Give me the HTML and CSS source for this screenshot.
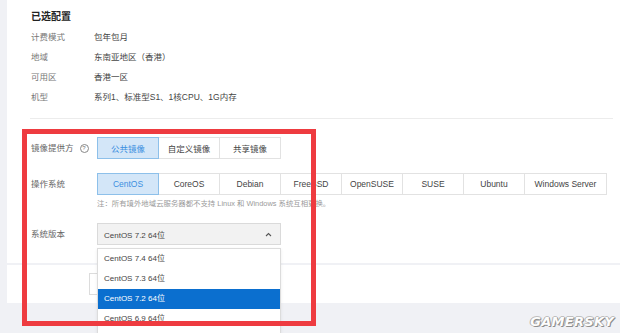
FILE: index.html
```html
<!DOCTYPE html>
<html lang="zh">
<head>
<meta charset="utf-8">
<link rel="stylesheet" href="styles.css">
</head>
<body>
<div class="page">
  <div class="card card-main">
    <h3 class="title">已选配置</h3>
    <div class="info">
      <span class="lbl">计费模式</span><span class="val">包年包月</span>
      <span class="lbl">地域</span><span class="val">东南亚地区（香港）</span>
      <span class="lbl">可用区</span><span class="val">香港一区</span>
      <span class="lbl">机型</span><span class="val">系列1、标准型S1、1核CPU、1G内存</span>
    </div>
    <div class="divider"></div>
    <div class="form">
      <div class="row">
        <div class="flabel">镜像提供方 <span class="help">?</span></div>
        <div class="btns">
          <span class="btn on">公共镜像</span><span class="btn">自定义镜像</span><span class="btn">共享镜像</span>
        </div>
      </div>
      <div class="row row-os">
        <div class="flabel">操作系统</div>
        <div class="col">
          <div class="btns">
            <span class="btn on">CentOS</span><span class="btn">CoreOS</span><span class="btn">Debian</span><span class="btn">FreeBSD</span><span class="btn">OpenSUSE</span><span class="btn">SUSE</span><span class="btn">Ubuntu</span><span class="btn wide">Windows Server</span>
          </div>
          <div class="note">注：所有境外地域云服务器都不支持 Linux 和 Windows 系统互相更换。</div>
        </div>
      </div>
      <div class="row row-ver">
        <div class="flabel">系统版本</div>
        <div class="select-wrap">
          <div class="select">
            <span>CentOS 7.2 64位</span>
            <svg class="caret" width="7" height="5" viewBox="0 0 7 5"><path d="M1 4 L3.5 1.5 L6 4" fill="none" stroke="#555" stroke-width="1.1"/></svg>
          </div>
          <ul class="menu">
            <li>CentOS 7.4 64位</li>
            <li>CentOS 7.3 64位</li>
            <li class="sel">CentOS 7.2 64位</li>
            <li>CentOS 6.9 64位</li>
          </ul>
        </div>
      </div>
    </div>
  </div>
  <div class="card card-foot">
    <span class="fbtn"></span>
  </div>
</div>
<div class="redbox"></div>
<div class="wm">GAMERSKY</div>
</body>
</html>
```
FILE: styles.css
```css
html, body {
  margin: 0;
  padding: 0;
}
body {
  width: 620px;
  height: 333px;
  overflow: hidden;
  background: #f0f1f5;
  font-family: "Liberation Sans", "Noto Sans CJK SC", sans-serif;
  font-size: 8.5px;
  color: #444;
  position: relative;
}
.page {
  padding-left: 7px;
}
.card {
  background: #fff;
}
.card-main {
  height: 263px;
  padding: 8px 7px 0 24px;
  box-sizing: border-box;
}
.title {
  margin: 0;
  font-size: 10px;
  line-height: 18px;
  font-weight: bold;
  color: #222;
}
.info {
  display: grid;
  grid-template-columns: 63px auto;
  line-height: 20px;
  margin-top: 1px;
}
.lbl {
  color: #777;
}
.val {
  color: #444;
}
.divider {
  margin-top: 11px;
  border-top: 1px solid #ececec;
  margin-left: -1px;
}
.form {
  padding-top: 18px;
}
.row {
  display: flex;
  align-items: flex-start;
}
.flabel {
  width: 66px;
  flex: none;
  line-height: 22px;
  color: #666;
  display: flex;
  align-items: center;
}
.help {
  display: inline-flex;
  width: 7px;
  height: 7px;
  border: 1px solid #888;
  border-radius: 50%;
  font-size: 6px;
  line-height: 7px;
  justify-content: center;
  color: #777;
  margin-left: 6px;
}
.btns {
  display: flex;
}
.btn {
  width: 62px;
  height: 22px;
  box-sizing: border-box;
  border: 1px solid #e2e2e2;
  margin-left: -1px;
  display: flex;
  align-items: center;
  justify-content: center;
  color: #444;
  background: #fff;
}
.btn:first-child {
  margin-left: 0;
}
.btn.wide {
  width: 83px;
}
.btn.on {
  background: #d3e6f8;
  border-color: #8dc0ea;
  color: #3b8fe0;
  position: relative;
}
.row-os {
  margin-top: 14px;
}
.note {
  margin-top: 3px;
  font-size: 7.4px;
  line-height: 12px;
  color: #9a9a9a;
}
.row-ver {
  margin-top: 13px;
}
.select-wrap {
  position: relative;
  width: 184px;
}
.select {
  height: 22px;
  box-sizing: border-box;
  border: 1px solid #dadada;
  background: #f2f2f2;
  display: flex;
  align-items: center;
  justify-content: space-between;
  padding: 0 8px 0 6px;
  color: #444;
  font-size: 8px;
}
.menu {
  position: absolute;
  top: 25px;
  left: 0;
  width: 184px;
  margin: 0;
  padding: 0 0 8px;
  list-style: none;
  background: #fff;
  border: 1px solid #dcdcdc;
  box-sizing: border-box;
  box-shadow: 0 1px 3px rgba(0,0,0,0.08);
  z-index: 2;
}
.menu li {
  height: 20px;
  line-height: 20px;
  padding-left: 6px;
  font-size: 8px;
  color: #444;
}
.menu li.sel {
  background: #0b6fcf;
  color: #fff;
}
.card-foot {
  margin-top: 2px;
  height: 38px;
  padding: 8px 0 0 82px;
  box-sizing: border-box;
}
.fbtn {
  display: block;
  width: 60px;
  height: 22px;
  box-sizing: border-box;
  border: 1px solid #dcdcdc;
}
.redbox {
  position: absolute;
  left: 22px;
  top: 129px;
  width: 294px;
  height: 197px;
  box-sizing: border-box;
  border: 5px solid #ee3b40;
  z-index: 5;
}
.wm {
  position: absolute;
  right: 6px;
  bottom: 4px;
  font-family: "DejaVu Sans", sans-serif;
  font-weight: bold;
  font-style: italic;
  font-size: 13px;
  letter-spacing: 0.3px;
  color: #fdfdfd;
  text-shadow: 1px 1px 0 #8e8e8e, -1px 0 0 #b0b0b0, 0 -1px 0 #c0c0c0, 1px 0 0 #a0a0a0;
}
```
